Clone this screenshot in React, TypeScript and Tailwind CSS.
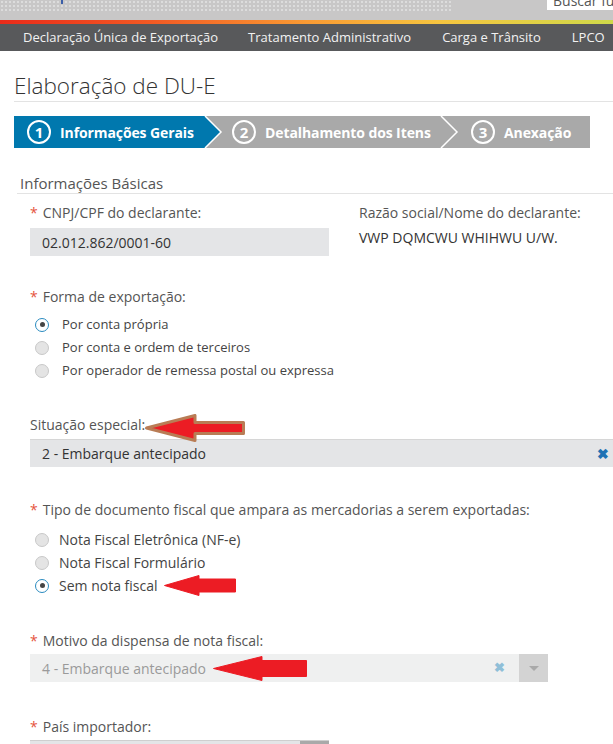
import React from "react";

const font = { fontFamily: '"Open Sans", "Liberation Sans", sans-serif' };

function Arrow({
  width,
  height,
  head,
  shaft,
  outline,
  className,
}: {
  width: number;
  height: number;
  head: number;
  shaft: number;
  outline?: boolean;
  className: string;
}) {
  const p = outline ? 1.5 : 0.5;
  const h = height;
  const s1 = (h - shaft) / 2;
  const s2 = (h + shaft) / 2;
  const pts = `${p},${h / 2} ${head},${p} ${head},${s1} ${width - p},${s1} ${width - p},${s2} ${head},${s2} ${head},${h - p}`;
  return (
    <svg
      className={className}
      width={width}
      height={height}
      viewBox={`0 0 ${width} ${height}`}
    >
      <polygon
        points={pts}
        fill="#ec1c24"
        stroke={outline ? "#b97c55" : "#ec1c24"}
        strokeWidth={outline ? 3 : 1}
        strokeLinejoin="round"
      />
    </svg>
  );
}

function Radio({
  checked,
  label,
  big,
}: {
  checked?: boolean;
  label: string;
  big?: boolean;
}) {
  return (
    <div className="flex items-center h-[23px]">
      <span
        className={[
          "w-[14px] h-[14px] rounded-full border flex items-center justify-center",
          checked
            ? "border-[#2a8bc0] bg-white"
            : "border-[#c8c8c8] bg-[#e4e4e4]",
        ].join(" ")}
      >
        {checked && <span className="w-[5px] h-[5px] rounded-full bg-[#444]" />}
      </span>
      <span
        className={
          big
            ? "ml-[10px] text-[14px] text-[#444]"
            : "ml-[13px] text-[13px] text-[#444]"
        }
      >
        {label}
      </span>
    </div>
  );
}

function Label({ req, children }: { req?: boolean; children: React.ReactNode }) {
  return (
    <div className="text-[14px] text-[#555] leading-[20px]">
      {req && <span className="text-[#e5533d] mr-[5px]">*</span>}
      {children}
    </div>
  );
}

function Step({
  n,
  label,
  active,
  first,
  last,
  width,
}: {
  n: number;
  label: string;
  active?: boolean;
  first?: boolean;
  last?: boolean;
  width: number;
}) {
  const bg = active ? "#0078ae" : "#a9a9a9";
  const h = 32;
  const tip = 16;
  const w = width + (last ? 0 : tip);
  return (
    <div className="relative h-[32px] flex items-center" style={{ width }}>
      <svg
        className="absolute left-0 top-0 overflow-visible"
        width={w}
        height={h}
        viewBox={`0 0 ${w} ${h}`}
      >
        <polygon
          points={
            last
              ? `0,0 ${width},0 ${width},${h} 0,${h} ${tip},${h / 2}`
              : first
                ? `0,0 ${width},0 ${width + tip},${h / 2} ${width},${h} 0,${h}`
                : `0,0 ${width},0 ${width + tip},${h / 2} ${width},${h} 0,${h} ${tip},${h / 2}`
          }
          fill={bg}
        />
        {!first && (
          <polyline
            points={`0,0 ${tip},${h / 2} 0,${h}`}
            fill="none"
            stroke="#fff"
            strokeWidth={1.5}
          />
        )}
      </svg>
      <div
        className="relative flex items-center"
        style={{ paddingLeft: first ? 13 : last ? 30 : 27 }}
      >
        <span className="w-[24px] h-[24px] rounded-full border-2 border-white text-white text-[15px] font-bold flex items-center justify-center leading-none">
          {n}
        </span>
        <span className="ml-[9px] text-white text-[14px] font-bold tracking-[-0.1px] whitespace-nowrap">
          {label}
        </span>
      </div>
    </div>
  );
}

export default function App() {
  return (
    <div className="w-[613px] h-[744px] overflow-hidden bg-white" style={font}>
      {/* top header */}
      <div className="relative h-[20px] bg-[#c8c7c7]">
        <svg className="absolute left-0 top-0" width={453} height={13}>
          <defs>
            <pattern id="dots" width="4" height="4" patternUnits="userSpaceOnUse">
              <rect x="1" y="1" width="2" height="2" fill="#dcdcdc" />
            </pattern>
          </defs>
          <rect width="453" height="13" fill="url(#dots)" />
          <rect x="61" y="0" width="2" height="4" fill="#3b5ea8" />
        </svg>
        <div className="absolute left-[547px] top-0 w-[70px] h-[10px] bg-white overflow-hidden">
          <div className="text-[14px] text-[#555] leading-none mt-[-6px] ml-[6px] whitespace-nowrap">
            Buscar funcionalidade
          </div>
        </div>
      </div>
      <div className="h-[4px] bg-[linear-gradient(to_right,#ea2b1a_0%,#f25a24_25%,#f99a33_50%,#f6c540_72%,#cfd94a_100%)]" />
      <nav className="h-[27px] bg-[#58595b] flex items-center text-[13px] text-[#f2f2f2] whitespace-nowrap">
        <span className="ml-[23px]">Declaração Única de Exportação</span>
        <span className="ml-[30px]">Tratamento Administrativo</span>
        <span className="ml-[31px]">Carga e Trânsito</span>
        <span className="ml-[31px]">LPCO</span>
      </nav>

      <div className="pl-[14px]">
        <h1 className="mt-[20px] text-[22.5px] font-light text-[#333] leading-[30px]">
          Elaboração de DU-E
        </h1>
        <div className="h-px bg-[#e3e3e3]" />

        <div className="mt-[14px] flex">
          <Step n={1} label="Informações Gerais" active first width={191} />
          <Step n={2} label="Detalhamento dos Itens" width={236} />
          <Step n={3} label="Anexação" last width={149} />
        </div>

        <div className="mt-[25px] ml-[6px] text-[15px] text-[#555] leading-[20px]">
          Informações Básicas
        </div>
        <div className="ml-[3px] h-px bg-[#e3e3e3]" />

        <div className="pl-[16px]">
          <div className="mt-[9px] flex">
            <div className="w-[329px]">
              <Label req>CNPJ/CPF do declarante:</Label>
              <div className="mt-[5px] w-[299px] h-[28px] bg-[#e4e5e7] flex items-center pl-[12px] text-[14px] text-[#333]">
                02.012.862/0001-60
              </div>
            </div>
            <div>
              <div className="text-[14px] text-[#555] leading-[20px]">
                Razão social/Nome do declarante:
              </div>
              <div className="mt-[5px] text-[14px] text-[#333] leading-[20px]">
                VWP DQMCWU WHIHWU U/W.
              </div>
            </div>
          </div>

          <div className="mt-[31px]">
            <Label req>Forma de exportação:</Label>
          </div>
          <div className="mt-[6px] pl-[5px]">
            <Radio checked label="Por conta própria" />
            <Radio label="Por conta e ordem de terceiros" />
            <Radio label="Por operador de remessa postal ou expressa" />
          </div>

          <div className="relative mt-[33px]">
            <Label>Situação especial:</Label>
            <Arrow
              outline
              width={100}
              height={28}
              head={50}
              shaft={11}
              className="absolute left-[115px] top-[-1px]"
            />
          </div>
          <div className="mt-[4px] h-[28px] bg-[#e4e5e7] border-t border-[#d6d6d6] flex items-center pl-[12px] pr-[4px] text-[14px] text-[#333]">
            <span className="flex-1">2 - Embarque antecipado</span>
            <span className="text-[#1e72b4] text-[14px] font-bold">✖</span>
          </div>

          <div className="mt-[33px]">
            <Label req>Tipo de documento fiscal que ampara as mercadorias a serem exportadas:</Label>
          </div>
          <div className="mt-[8px] pl-[5px]">
            <Radio big label="Nota Fiscal Eletrônica (NF-e)" />
            <Radio big label="Nota Fiscal Formulário" />
            <div className="relative">
              <Radio big checked label="Sem nota fiscal" />
              <Arrow
                width={72}
                height={21}
                head={35}
                shaft={13}
                className="absolute left-[129px] top-[1px]"
              />
            </div>
          </div>

          <div className="mt-[34px]">
            <Label req>Motivo da dispensa de nota fiscal:</Label>
          </div>
          <div className="relative mt-[3px] w-[518px] h-[28px] bg-[#eff0f0] flex items-center text-[14px] text-[#9a9a9a]">
            <span className="flex-1 pl-[12px]">4 - Embarque antecipado</span>
            <span className="text-[#8fbfd8] text-[13px] font-bold mr-[14px]">✖</span>
            <span className="w-[29px] h-full bg-[#d3d3d3] flex items-center justify-center">
              <span className="w-0 h-0 border-l-[5px] border-r-[5px] border-t-[5px] border-l-transparent border-r-transparent border-t-[#a9a9a9]" />
            </span>
            <Arrow
              width={94}
              height={25}
              head={49}
              shaft={16}
              className="absolute left-[183px] top-[2px]"
            />
          </div>

          <div className="mt-[35px]">
            <Label req>País importador:</Label>
          </div>
          <div className="mt-[3px] w-[299px] h-[28px] bg-[#e4e5e7] border-t border-[#cfcfcf] flex justify-end">
            <span className="w-[29px] h-full bg-[#a9a9a9]" />
          </div>
        </div>
      </div>
    </div>
  );
}
